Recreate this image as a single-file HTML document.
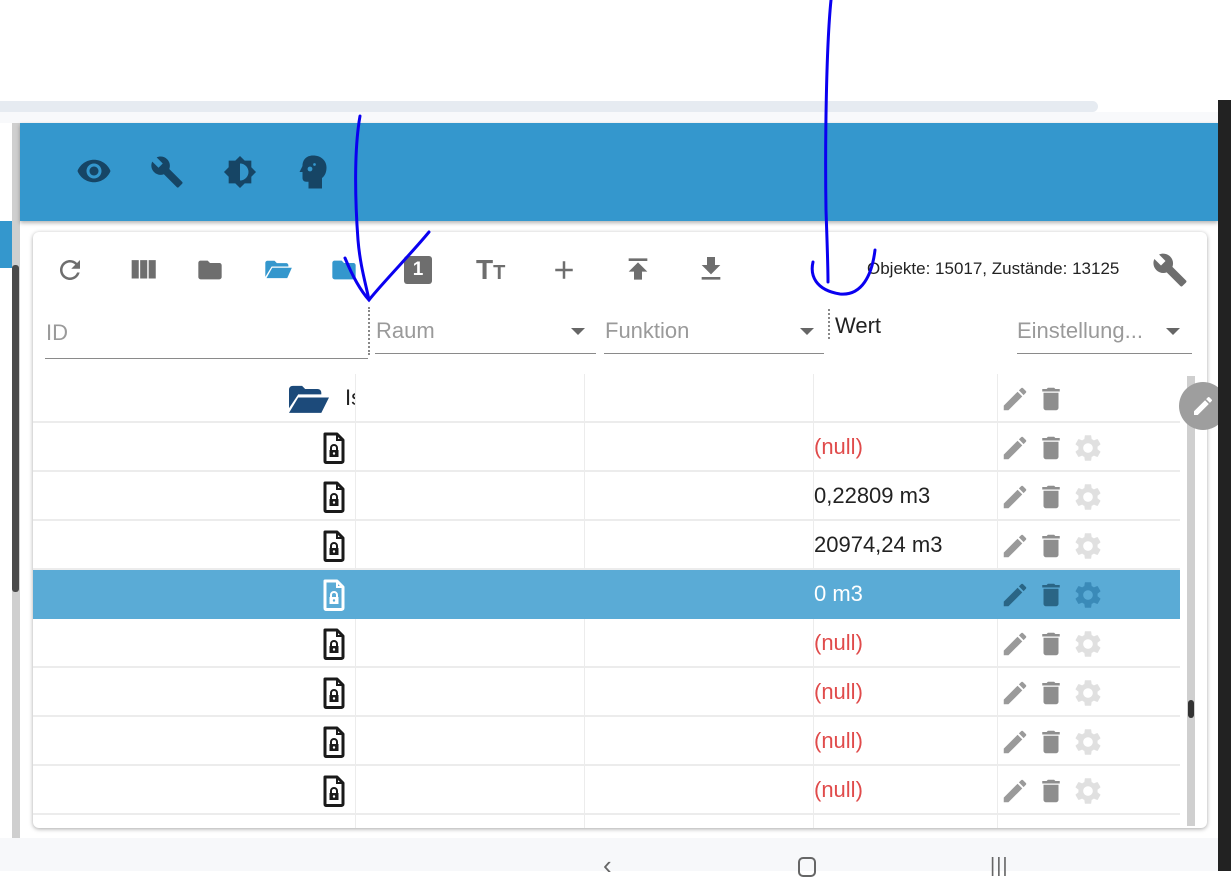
<!DOCTYPE html>
<html><head><meta charset="utf-8"><style>
*{margin:0;padding:0;box-sizing:border-box}
body{width:1231px;height:871px;overflow:hidden;background:#fff;position:relative;font-family:"Liberation Sans",Roboto,sans-serif}
.a{position:absolute}
svg.i{position:absolute}
.lbl{position:absolute;font-size:22px;color:#9a9a9a}
.ul{position:absolute;height:1px;background:#8a8a8a}
.tri{position:absolute;width:0;height:0;border-left:7px solid transparent;border-right:7px solid transparent;border-top:7px solid #666}
.row{position:absolute;left:33px;width:1147px;height:49px;border-bottom:2px solid #ececec}
.val{position:absolute;left:814px;font-size:22px;color:#222}
.null{color:#e04b4b}
</style></head><body>
<div class="a" style="left:0;top:101px;width:1098px;height:11px;background:#e6ebf1;border-radius:0 6px 6px 0"></div>
<div class="a" style="left:0;top:112px;width:1218px;height:11px;background:#f8f9fb"></div>
<div class="a" style="left:0;top:221px;width:12px;height:47px;background:#3497cd"></div>
<div class="a" style="left:12px;top:123px;width:8px;height:715px;background:#cfcfcf"></div>
<div class="a" style="left:12px;top:265px;width:7px;height:327px;background:#4a4a4a;border-radius:3px"></div>
<div class="a" style="left:20px;top:123px;width:1198px;height:98px;background:#3497cd;box-shadow:0 2px 4px rgba(0,0,0,.3)"></div>
<svg class="i" style="left:76px;top:153px" width="36" height="36" viewBox="0 0 24 24" fill="#164565"><path d="M12 4.5C7 4.5 2.730 7.610 1 12c1.73 4.39 6 7.5 11 7.5s9.27-3.11 11-7.5c-1.73-4.39-6-7.5-11-7.5zM12 17c-2.76 0-5-2.24-5-5s2.24-5 5-5 5 2.24 5 5-2.24 5-5 5zm0-8c-1.66 0-3 1.34-3 3s1.34 3 3 3 3-1.34 3-3-1.34-3-3-3z"/></svg>
<svg class="i" style="left:150px;top:155px" width="34" height="34" viewBox="0 0 24 24" fill="#164565"><path d="M22.7 19l-9.1-9.1c.9-2.3.4-5-1.5-6.9-2-2-5-2.4-7.4-1.3L9 6 6 9 1.6 4.7C.4 7.1.9 10.1 2.9 12.1c1.9 1.9 4.6 2.4 6.9 1.5l9.1 9.1c.4.4 1 .4 1.4 0l2.3-2.3c.5-.4.5-1.1.1-1.4z"/></svg>
<svg class="i" style="left:223px;top:155px" width="34" height="34" viewBox="0 0 24 24" fill="#164565"><path d="M20 15.31L23.31 12 20 8.69V4h-4.69L12 .69 8.69 4H4v4.69L.69 12 4 15.31V20h4.69L12 23.31 15.31 20H20v-4.69zM12 18V6c3.31 0 6 2.69 6 6s-2.69 6-6 6z"/></svg>
<svg class="i" style="left:298px;top:154px" width="30" height="36" viewBox="0 0 20 24" fill="#164565"><path d="M10 1C5.5 1 3 4 3 8l-2 4h2v4c0 1.5 1 2.5 2.5 2.5H7V23h9v-7c2-1.5 3-4 3-7 0-4.5-3.5-8-9-8z"/><circle cx="8" cy="10" r="1.6" fill="#3497cd"/><circle cx="11" cy="7" r=".9" fill="#3497cd"/></svg>
<div class="a" style="left:33px;top:232px;width:1174px;height:596px;background:#fff;border-radius:6px;box-shadow:0 1px 4px rgba(0,0,0,.35)"></div>
<svg class="i" style="left:55px;top:255px" width="30" height="30" viewBox="0 0 24 24" fill="#6e6e6e"><path d="M17.65 6.35C16.2 4.9 14.21 4 12 4c-4.42 0-7.99 3.58-7.99 8s3.57 8 7.99 8c3.73 0 6.84-2.55 7.73-6h-2.08c-.82 2.33-3.04 4-5.65 4-3.31 0-6-2.69-6-6s2.69-6 6-6c1.66 0 3.14.69 4.22 1.78L13 11h7V4l-2.35 2.35z"/></svg>
<svg class="i" style="left:126px;top:253px" width="34" height="34" viewBox="0 0 24 24" fill="#6e6e6e"><path d="M10 18h5V5h-5v13zm-6 0h5V5H4v13zM16 5v13h5V5h-5z"/></svg>
<svg class="i" style="left:196px;top:256px" width="28" height="28" viewBox="0 0 24 24" fill="#6e6e6e"><path d="M10 4H4c-1.1 0-2 .9-2 2v12c0 1.1.9 2 2 2h16c1.1 0 2-.9 2-2V8c0-1.1-.9-2-2-2h-8l-2-2z"/></svg>
<svg class="i" style="left:263px;top:256px" width="30" height="28" viewBox="0 0 26 24" fill="#3497cd"><path d="M2 6c0-1.1.9-2 2-2h6l2 2h8c1.1 0 2 .9 2 2v1H7.5L2 18z"/><path d="M8 10h17l-4 9H3z"/></svg>
<svg class="i" style="left:330px;top:256px" width="28" height="28" viewBox="0 0 24 24" fill="#3497cd"><path d="M10 4H4c-1.1 0-2 .9-2 2v12c0 1.1.9 2 2 2h16c1.1 0 2-.9 2-2V8c0-1.1-.9-2-2-2h-8l-2-2z"/></svg>
<div class="a" style="left:404px;top:256px;width:28px;height:28px;background:#6e6e6e;border-radius:3px;color:#fff;font-weight:bold;font-size:19px;text-align:center;line-height:28px">1</div>
<div class="a" style="left:476px;top:255px;font-size:28px;font-weight:bold;color:#6e6e6e;line-height:30px">T<span style="font-size:20px">T</span></div>
<svg class="i" style="left:549px;top:255px" width="30" height="30" viewBox="0 0 24 24" fill="#6e6e6e"><path d="M19 13h-6v6h-2v-6H5v-2h6V5h2v6h6v2z"/></svg>
<svg class="i" style="left:622px;top:253px" width="32" height="32" viewBox="0 0 24 24" fill="#6e6e6e"><path d="M5 4v2h14V4H5zm0 10h4v6h6v-6h4l-7-7-7 7z"/></svg>
<svg class="i" style="left:695px;top:253px" width="32" height="32" viewBox="0 0 24 24" fill="#6e6e6e"><path d="M19 9h-4V3H9v6H5l7 7 7-7zM5 18v2h14v-2H5z"/></svg>
<div class="a" style="left:867px;top:259px;font-size:17px;color:#222">Objekte: 15017, Zustände: 13125</div>
<svg class="i" style="left:1152px;top:252px" width="36" height="36" viewBox="0 0 24 24" fill="#6e6e6e"><path d="M22.7 19l-9.1-9.1c.9-2.3.4-5-1.5-6.9-2-2-5-2.4-7.4-1.3L9 6 6 9 1.6 4.7C.4 7.1.9 10.1 2.9 12.1c1.9 1.9 4.6 2.4 6.9 1.5l9.1 9.1c.4.4 1 .4 1.4 0l2.3-2.3c.5-.4.5-1.1.1-1.4z"/></svg>
<div class="lbl" style="left:46px;top:320px">ID</div><div class="ul" style="left:45px;top:358px;width:323px"></div>
<div class="a" style="left:368px;top:307px;height:48px;border-left:2px dotted #888"></div>
<div class="lbl" style="left:376px;top:318px">Raum</div><div class="ul" style="left:375px;top:353px;width:221px"></div><div class="tri" style="left:571px;top:328px"></div>
<div class="lbl" style="left:605px;top:318px">Funktion</div><div class="ul" style="left:604px;top:353px;width:220px"></div><div class="tri" style="left:800px;top:328px"></div>
<div class="a" style="left:828px;top:309px;height:30px;border-left:2px dotted #888"></div>
<div class="a" style="left:835px;top:313px;font-size:22px;color:#222">Wert</div>
<div class="lbl" style="left:1017px;top:318px">Einstellung...</div><div class="ul" style="left:1017px;top:353px;width:175px"></div><div class="tri" style="left:1166px;top:328px"></div>
<div id="rows"></div>
<div class="a" style="left:1187px;top:376px;width:8px;height:450px;background:#cfcfcf"></div>
<div class="a" style="left:1188px;top:700px;width:6px;height:18px;background:#333;border-radius:3px"></div>
<div class="a" style="left:1179px;top:382px;width:48px;height:48px;border-radius:50%;background:#9e9e9e"></div>
<svg class="i" style="left:1191px;top:394px" width="24" height="24" viewBox="0 0 24 24" fill="#fff"><path d="M3 17.25V21h3.75L17.81 9.94l-3.75-3.75L3 17.25zM20.71 7.04c.39-.39.39-1.02 0-1.41l-2.34-2.34c-.39-.39-1.020-.39-1.41 0l-1.83 1.83 3.75 3.75 1.83-1.83z"/></svg>
<div class="a" style="left:1218px;top:100px;width:13px;height:771px;background:#222"></div>
<div class="a" style="left:0;top:838px;width:1218px;height:33px;background:#f7f8fa"></div>
<div class="a" style="left:603px;top:850px;font-size:26px;color:#666">&lsaquo;</div>
<div class="a" style="left:798px;top:857px;width:18px;height:20px;border:2px solid #666;border-radius:5px"></div>
<div class="a" style="left:990px;top:855px;font-size:20px;color:#666;letter-spacing:1px">|||</div>
<svg class="a" style="left:0;top:0" width="1231" height="871" fill="none" stroke="#0a00f0" stroke-width="3" stroke-linecap="round">
<path d="M360 116C354 150 355 200 358 240C360 265 366 285 369 300"/>
<path d="M345 258C352 275 360 290 369 300C385 280 410 255 429 232"/>
<path d="M831 0C826 50 825 150 826 210C827 240 828 265 828 282"/>
<path d="M813 262C810 275 815 290 840 294C862 296 872 275 875 250"/>
</svg>
<script>
var vals=["","(null)","0,22809 m3","20974,24 m3","0 m3","(null)","(null)","(null)","(null)","(..."];
var edit='M3 17.25V21h3.75L17.81 9.94l-3.75-3.75L3 17.25zM20.71 7.04c.39-.39.39-1.02 0-1.41l-2.34-2.34c-.39-.39-1.02-.39-1.41 0l-1.83 1.83 3.75 3.75 1.83-1.83z';
var del='M6 19c0 1.1.9 2 2 2h8c1.1 0 2-.9 2-2V7H6v12zM19 4h-3.5l-1-1h-5l-1 1H5v2h14V4z';
var gear='M19.14 12.94c.04-.3.06-.61.06-.94 0-.32-.02-.64-.07-.94l2.03-1.58c.18-.14.23-.41.12-.61l-1.92-3.32c-.12-.22-.37-.29-.59-.22l-2.39.96c-.5-.38-1.03-.7-1.62-.94l-.36-2.54c-.04-.24-.24-.41-.48-.41h-3.84c-.24 0-.43.17-.47.41l-.36 2.54c-.59.24-1.13.57-1.62.94l-2.39-.96c-.22-.08-.47 0-.59.22L2.74 8.87c-.12.21-.08.47.12.61l2.03 1.58c-.05.3-.09.63-.09.94s.02.64.07.94l-2.03 1.58c-.18.14-.23.41-.12.61l1.92 3.32c.12.22.37.29.59.22l2.39-.96c.5.38 1.03.7 1.62.94l.36 2.54c.05.24.24.41.48.41h3.84c.24 0 .44-.17.47-.41l.36-2.54c.59-.24 1.13-.56 1.62-.94l2.39.96c.22.08.47 0 .59-.22l1.92-3.32c.12-.22.07-.47-.12-.61l-2.01-1.58zM12 15.6c-1.98 0-3.6-1.62-3.6-3.6s1.62-3.6 3.6-3.6 3.6 1.62 3.6 3.6-1.62 3.6-3.6 3.6z';
var h='';
for(var i=0;i<10;i++){
 var t=374+i*49, sel=(i==4), hgt=(i==9)?13:49;
 h+='<div class="row" style="top:'+t+'px;height:'+hgt+'px;'+(sel?'background:#5aabd6;border-bottom-color:#5aabd6':'')+(i==9?';border-bottom:none':'')+'"></div>';
 if(!sel){[355,584,813,997].forEach(function(x){h+='<div class="a" style="left:'+x+'px;top:'+t+'px;width:1px;height:'+hgt+'px;background:#ececec"></div>';});}
 if(i==9)continue;
 var fc=sel?'#fff':'#1a1a1a';
 if(i==0){
  h+='<svg class="i" style="left:289px;top:'+(t+11)+'px" width="40" height="28" viewBox="0 0 26 18" fill="#1c4a7a"><path d="M0 3c0-1.5 1-2.5 2.5-2.5h6l2 2h8c1.5 0 2.5 1 2.5 2.5v1H6L0 15z"/><path d="M6 8h20l-5 10H0z"/></svg><div class="a" style="left:345px;top:'+(t+11)+'px;font-size:22px;color:#222;width:10px;overflow:hidden">Is</div>';
 } else {
  h+='<svg class="i" style="left:322px;top:'+(t+9)+'px" width="24" height="32" viewBox="0 0 24 32"><path d="M3 2h12l6 6v21c0 1-1 1.5-1.5 1.5h-15C3.5 30.5 3 30 3 29z" fill="none" stroke="'+fc+'" stroke-width="3" stroke-linejoin="round"/><path d="M15 2v6h6" fill="none" stroke="'+fc+'" stroke-width="2"/><path d="M9 18v-2a3 3 0 0 1 6 0v2" fill="none" stroke="'+fc+'" stroke-width="2"/><rect x="7.5" y="18" width="9" height="7" fill="'+fc+'"/><circle cx="12" cy="21.5" r="1.2" fill="'+(sel?'#5aabd6':'#fff')+'"/></svg>';
 }
 var v=vals[i];
 if(v)h+='<div class="val'+(v=="(null)"?' null':'')+'" style="top:'+(t+11)+'px;'+(sel?'color:#fff':'')+'">'+v+'</div>';
 var ic=sel?'#2a6585':'#9a9a9a', gc=sel?'#3a8ab8':'#e0e0e0';
 h+='<svg class="i" style="left:1000px;top:'+(t+10)+'px" width="30" height="30" viewBox="0 0 24 24" fill="'+ic+'"><path d="'+edit+'"/></svg>';
 h+='<svg class="i" style="left:1036px;top:'+(t+9)+'px" width="30" height="32" viewBox="0 0 24 24" fill="'+(sel?'#2a6585':'#8e8e8e')+'"><path d="'+del+'"/></svg>';
 if(i>0)h+='<svg class="i" style="left:1072px;top:'+(t+9)+'px" width="32" height="32" viewBox="0 0 24 24" fill="'+gc+'"><path d="'+gear+'"/></svg>';
}
document.getElementById('rows').innerHTML=h;
</script>
</body></html>
